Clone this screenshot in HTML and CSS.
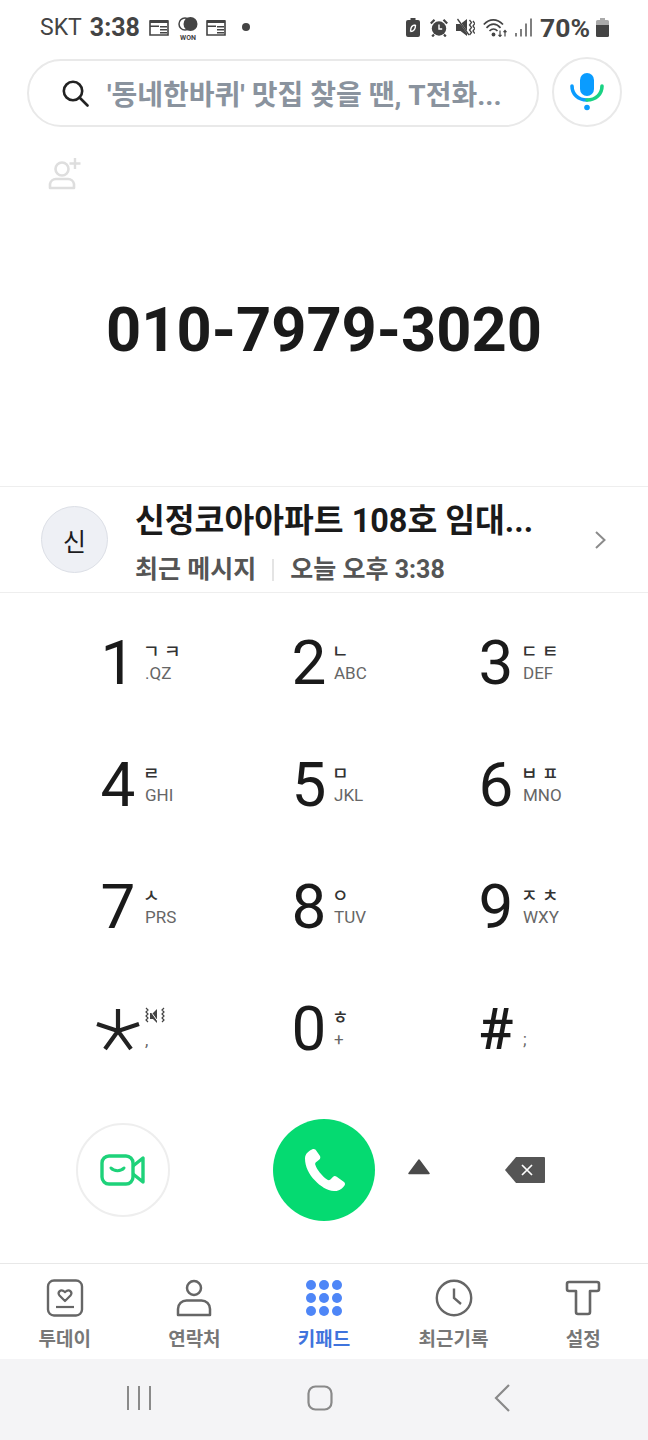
FILE: index.html
```html
<!DOCTYPE html>
<html lang="ko">
<head>
    <meta charset="UTF-8">
    <title>T전화 키패드</title>
    <link rel="stylesheet" href="styles.css">
</head>
<body>
    <!-- Status bar -->
    <div class="status">
        <div class="status-left">
            <span class="carrier">SKT</span>
            <span class="clock">3:38</span>
            <svg class="st-cal" viewBox="0 0 20 18"><path d="M1 3h18v14H1z" fill="none" stroke="#444" stroke-width="1.6"/><path d="M1 2h18v3H1zM11 8h7v1.5h-7zM11 11h7v1.5h-7zM11 14h7v1.5h-7zM1 7.5h9v1.5H1z" fill="#444"/></svg>
            <svg class="st-won" viewBox="0 0 22 24"><circle cx="8" cy="7" r="6" fill="none" stroke="#444" stroke-width="1.5"/><circle cx="13.5" cy="7" r="7" fill="#444"/><text x="11" y="22.5" class="won-text">WON</text></svg>
            <svg class="st-cal" viewBox="0 0 20 18"><path d="M1 3h18v14H1z" fill="none" stroke="#444" stroke-width="1.6"/><path d="M1 2h18v3H1zM11 8h7v1.5h-7zM11 11h7v1.5h-7zM11 14h7v1.5h-7zM1 7.5h9v1.5H1z" fill="#444"/></svg>
            <span class="st-dot"></span>
        </div>
        <div class="status-right">
            <svg class="st-ic" width="16" height="19" viewBox="0 0 16 19"><path d="M4.500 0h5v2h2.500A2 2 0 0 1 14 4V17A2 2 0 0 1 12 19H2A2 2 0 0 1 0 17V4A2 2 0 0 1 2 2H4.500z" fill="#444"/><path d="M9.500 7C6.500 7 4.500 9 4.500 13.500M4.500 13.500C7.500 13.500 9.500 11.500 9.500 7" stroke="#fff" stroke-width="1.400" fill="none"/></svg>
            <svg class="st-ic" width="18" height="19" viewBox="0 0 18 19"><circle cx="9" cy="10.500" r="7.200" fill="#444"/><path d="M9 6.500v4.500h3.200" stroke="#fff" stroke-width="1.400" fill="none"/><path d="M.8 5.500l3.700-3.700M17.200 5.500l-3.700-3.700M4 16.500l-1.800 2M14 16.500l1.800 2" stroke="#444" stroke-width="2.200"/></svg>
            <svg class="st-ic" width="19" height="19" viewBox="0 0 19 19"><path d="M0 6h4.500L11 1v17l-6.500-5H0z" fill="#444"/><path d="M2 1.500l11 15.500" stroke="#fff" stroke-width="1.300"/><path d="M1.500 1l11.500 16" stroke="#444" stroke-width="1.300"/><path d="M13.500 2l2 2.500-2 2.500 2 2.500-2 2.500 2 2.500-2 2.500M17 3l1.800 2.500L17 8l1.800 2.500L17 13l1.800 2.500" stroke="#444" stroke-width="1.300" fill="none"/></svg>
            <svg class="st-ic" width="24" height="19" viewBox="0 0 24 19"><path d="M.8 6.500C6.500.2 14 .2 20 6.500M3.500 9.800C8 5 13 5 17.500 9.800M6.500 13C9 10.300 12 10.300 14.500 13" stroke="#444" stroke-width="1.700" fill="none"/><circle cx="10.500" cy="16.500" r="1.900" fill="#444"/><path d="M17 12.500v6M22 18.500v-6M15.500 16.800l1.500 1.700 1.500-1.700M20.500 14.200l1.500-1.700 1.500 1.700" stroke="#444" stroke-width="1.200" fill="none"/></svg>
            <svg class="st-ic" width="17" height="19" viewBox="0 0 17 19"><path d="M1 15v3.500M6 11v7.500M11 5.500v13M16 .5v18" stroke="#555" stroke-width="1.500"/></svg>
            <span class="pct">70%</span>
            <svg class="st-ic" width="13" height="19" viewBox="0 0 13 19"><path d="M4 0h5v2h2.500A1.500 1.500 0 0 1 13 3.500V7H0V3.500A1.500 1.500 0 0 1 1.500 2H4z" fill="#aaa"/><path d="M0 7h13v10.500a1.500 1.500 0 0 1-1.500 1.500h-10A1.500 1.500 0 0 1 0 17.500z" fill="#444"/></svg>
        </div>
    </div>

    <!-- Search -->
    <div class="search-row">
        <div class="search-box">
            <svg width="28" height="28" viewBox="0 0 28 28"><circle cx="12" cy="12" r="9.200" fill="none" stroke="#222" stroke-width="2.600"/><path d="M18.500 18.500l8 8" stroke="#222" stroke-width="2.600" stroke-linecap="round"/></svg>
            <span class="search-text">'동네한바퀴' 맛집 찾을 땐, T전화...</span>
        </div>
        <div class="mic-btn">
            <svg width="34" height="38" viewBox="0 0 34 38"><rect x="10" y="0" width="14" height="23" rx="7" fill="#0a9cff"/><path d="M2 13C2 21 8 27 17 27" stroke="#0a9cff" stroke-width="3.600" stroke-linecap="round" fill="none"/><path d="M17 27C26 27 32 21 32 13" stroke="#19d283" stroke-width="3.600" stroke-linecap="round" fill="none"/><circle cx="17" cy="34.500" r="2.800" fill="#0a9cff"/></svg>
        </div>
    </div>

    <div class="add-row">
        <svg width="34" height="34" viewBox="0 0 34 34"><circle cx="14" cy="12" r="6.500" fill="none" stroke="#dedede" stroke-width="2.600"/><path d="M2 31v-4a6 6 0 0 1 6-5h12a6 6 0 0 1 6 5v4z" fill="none" stroke="#dedede" stroke-width="2.600" stroke-linejoin="round"/><path d="M27 1v11M21.500 6.500h11" stroke="#dedede" stroke-width="2.400"/></svg>
    </div>

    <div class="number">010-7979-3020</div>

    <!-- Matched contact -->
    <div class="match">
        <div class="avatar">신</div>
        <div class="match-info">
            <div class="match-name">신정코아아파트 108호 임대...</div>
            <div class="match-sub"><span>최근 메시지</span><i class="sep"></i><span>오늘 오후 3:38</span></div>
        </div>
        <svg class="chev" width="13" height="20" viewBox="0 0 13 20"><path d="M2 2l8.500 8L2 18" fill="none" stroke="#8b8b8b" stroke-width="2"/></svg>
    </div>

    <!-- Keypad -->
    <div class="keypad">
        <div class="key"><span class="digit">1</span><span class="sub"><b>ㄱ ㅋ</b><em>.QZ</em></span></div>
        <div class="key"><span class="digit">2</span><span class="sub"><b>ㄴ</b><em>ABC</em></span></div>
        <div class="key"><span class="digit">3</span><span class="sub"><b>ㄷ ㅌ</b><em>DEF</em></span></div>
        <div class="key"><span class="digit">4</span><span class="sub"><b>ㄹ</b><em>GHI</em></span></div>
        <div class="key"><span class="digit">5</span><span class="sub"><b>ㅁ</b><em>JKL</em></span></div>
        <div class="key"><span class="digit">6</span><span class="sub"><b>ㅂ ㅍ</b><em>MNO</em></span></div>
        <div class="key"><span class="digit">7</span><span class="sub"><b>ㅅ</b><em>PRS</em></span></div>
        <div class="key"><span class="digit">8</span><span class="sub"><b>ㅇ</b><em>TUV</em></span></div>
        <div class="key"><span class="digit">9</span><span class="sub"><b>ㅈ ㅊ</b><em>WXY</em></span></div>
        <div class="key">
            <span class="digit">
                <svg width="46" height="46" viewBox="0 0 46 46"><path d="M23 3v22M23 25L2 18M23 25L44 18M23 25L10 43M23 25L36 43" stroke="#222" stroke-width="4.200" fill="none"/></svg>
            </span>
            <span class="sub">
                <svg class="mute" width="22" height="18" viewBox="0 0 22 18"><path d="M6 6h3l4-4v14l-4-4H6z" fill="#444"/><path d="M5 2l10 14" stroke="#fff" stroke-width="1"/><path d="M2 1l2 2-2 2 2 2-2 2 2 2-2 2 2 2M20 1l-2 2 2 2-2 2 2 2-2 2 2 2-2 2" stroke="#444" stroke-width="1.200" fill="none"/></svg>
                <em>,</em>
            </span>
        </div>
        <div class="key"><span class="digit">0</span><span class="sub"><b>ㅎ</b><em>+</em></span></div>
        <div class="key"><span class="digit hash">#</span><span class="sub"><b>&nbsp;</b><em>;</em></span></div>
    </div>

    <!-- Call actions -->
    <div class="actions">
        <div class="video-btn">
            <svg width="46" height="32" viewBox="0 0 46 32"><rect x="2" y="2" width="31" height="28" rx="7" fill="none" stroke="#1ed27a" stroke-width="3.400"/><path d="M33 12l10-8v24l-10-8" fill="none" stroke="#1ed27a" stroke-width="3.400" stroke-linejoin="round"/><path d="M11 14c3 3.500 10 3.500 13 0" fill="none" stroke="#1ed27a" stroke-width="3" stroke-linecap="round"/></svg>
        </div>
        <div class="call-btn">
            <svg width="46" height="46" viewBox="0 0 46 46"><path d="M11 2.500c-3 1.500-7 4-7 9 0 8 4 16 10 22 5 5.500 12 10 19 10.500 5 .4 8.500-2.500 10.500-5.500 1-1.500.5-2.800-.8-3.800l-7-5c-1.400-1-2.600-1-3.800.2l-2.500 2.600c-1 1-2 1-3 .3-3-2-5.500-4.500-7.500-7-2-2.500-3.500-5-4.600-8-.4-1.200 0-2 1-2.800l2.800-2.200c1.300-1 1.500-2.300.9-3.800L15.500 4c-.8-1.800-2.700-2.500-4.500-1.500z" fill="#fff"/></svg>
        </div>
        <svg class="caret" width="22" height="16" viewBox="0 0 22 16"><path d="M11 1L21 14.500H1z" fill="#4a4a4a" stroke="#4a4a4a" stroke-width="1.500" stroke-linejoin="round"/></svg>
        <svg class="back" width="42" height="28" viewBox="0 0 42 28"><path d="M12 1h28a1 1 0 0 1 1 1v24a1 1 0 0 1-1 1H12L1 14z" fill="#555"/><path d="M18 9l10 10M28 9L18 19" stroke="#fff" stroke-width="1.700"/></svg>
    </div>

    <!-- Bottom tabs -->
    <div class="tabs">
        <div class="tab">
            <svg width="38" height="38" viewBox="0 0 38 38"><rect x="2" y="1.500" width="34" height="35" rx="6" fill="none" stroke="#666" stroke-width="2.400"/><path d="M19 22l-5.500-5.500c-2.500-3 1-6.500 4-4.500l1.500 1.200 1.500-1.200c3-2 6.500 1.500 4 4.500z" fill="none" stroke="#666" stroke-width="2.200" stroke-linejoin="round"/><path d="M10 28h18" stroke="#666" stroke-width="2.200"/></svg>
            <span>투데이</span>
        </div>
        <div class="tab">
            <svg width="36" height="38" viewBox="0 0 36 38"><circle cx="18" cy="9" r="7" fill="none" stroke="#666" stroke-width="2.500"/><path d="M2 36v-6a8.500 8.500 0 0 1 8.500-8.500h15A8.500 8.500 0 0 1 34 30v6z" fill="none" stroke="#666" stroke-width="2.500" stroke-linejoin="round"/></svg>
            <span>연락처</span>
        </div>
        <div class="tab active">
            <div class="dots"><i></i><i></i><i></i><i></i><i></i><i></i><i></i><i></i><i></i></div>
            <span>키패드</span>
        </div>
        <div class="tab">
            <svg width="38" height="38" viewBox="0 0 38 38"><circle cx="19" cy="19" r="17.200" fill="none" stroke="#666" stroke-width="2.400"/><path d="M19 9.500V19l7 6" fill="none" stroke="#666" stroke-width="2.400"/></svg>
            <span>최근기록</span>
        </div>
        <div class="tab">
            <svg width="36" height="38" viewBox="0 -1 36 38"><path d="M4 2h28a2 2 0 0 1 2 2v5a2 2 0 0 1-2 2h-7v21a2 2 0 0 1-2 2H13a2 2 0 0 1-2-2V11H4a2 2 0 0 1-2-2V4a2 2 0 0 1 2-2z" fill="none" stroke="#666" stroke-width="2.600" stroke-linejoin="round"/></svg>
            <span>설정</span>
        </div>
    </div>

    <!-- Android nav -->
    <div class="sysbar">
        <svg width="26" height="26" viewBox="0 0 26 26"><path d="M2 1v24M13 1v24M24 1v24" stroke="#8a8a8a" stroke-width="2"/></svg>
        <svg class="home" width="26" height="26" viewBox="0 0 26 26"><rect x="1.500" y="1.500" width="23" height="23" rx="7" fill="none" stroke="#8a8a8a" stroke-width="2.200"/></svg>
        <svg width="18" height="28" viewBox="0 0 18 28"><path d="M15 1L2 14l13 13" fill="none" stroke="#8a8a8a" stroke-width="2.200"/></svg>
    </div>
</body>
</html>
```
FILE: styles.css
```css
* {
    box-sizing: border-box;
}

body {
    margin: 0;
    width: 648px;
    height: 1440px;
    background-color: #fff;
    font-family: Roboto, "Noto Sans CJK KR", sans-serif;
    color: #1c1c1e;
    overflow: hidden;
    display: flex;
    flex-direction: column;
}

/* Status bar */
.status {
    height: 54px;
    padding: 0 39px 0 40px;
    display: flex;
    justify-content: space-between;
    align-items: center;
    color: #444;
}

.status-left,
.status-right {
    display: flex;
    align-items: center;
}

.carrier {
    font-size: 23px;
    margin-right: 8px;
}

.clock {
    font-size: 25px;
    font-weight: 700;
    margin-right: 9px;
}

.st-cal {
    width: 20px;
    height: 18px;
    margin-right: 8px;
}

.st-won {
    width: 22px;
    height: 24px;
    margin-right: 7px;
    margin-top: 3px;
}

.won-text {
    font-size: 7px;
    font-weight: 700;
    text-anchor: middle;
    fill: #444;
}

.st-dot {
    width: 8px;
    height: 8px;
    margin-left: 8px;
    border-radius: 50%;
    background-color: #444;
}

.st-ic {
    margin-left: 8px;
}

.pct {
    font-size: 26.5px;
    font-weight: 700;
    margin-left: 8px;
}

.status-right .pct + .st-ic {
    margin-left: 6px;
}

/* Search */
.search-row {
    height: 70px;
    margin-top: 3px;
    padding: 0 26px 0 27px;
    display: flex;
    align-items: flex-end;
    justify-content: space-between;
}

.search-box {
    width: 512px;
    height: 68px;
    border: 2px solid #e9e9e9;
    border-radius: 34px;
    padding-left: 32px;
    display: flex;
    align-items: center;
}

.search-text {
    margin-left: 18px;
    font-size: 28px;
    font-weight: 700;
    color: #8a939e;
    white-space: nowrap;
}

.mic-btn {
    width: 70px;
    height: 70px;
    border: 2px solid #e9e9e9;
    border-radius: 50%;
    display: flex;
    align-items: center;
    justify-content: center;
}

.add-row {
    height: 34px;
    margin-top: 30px;
    padding-left: 48px;
}

.number {
    height: 295px;
    padding-top: 100px;
    font-size: 61.4px;
    font-weight: 700;
    line-height: 78px;
    text-align: center;
    color: #1a1a1a;
}

/* Matched contact */
.match {
    height: 107px;
    padding: 0 41px 0 41px;
    border-top: 1px solid #eee;
    border-bottom: 1px solid #eee;
    display: flex;
    align-items: center;
}

.avatar {
    width: 67px;
    height: 67px;
    border: 1px solid #dcdfe6;
    border-radius: 50%;
    background-color: #eef0f5;
    font-size: 25px;
    display: flex;
    align-items: center;
    justify-content: center;
    flex-shrink: 0;
}

.match-info {
    margin: 5px 0 0 27px;
    flex: 1;
}

.match-name {
    font-size: 32.4px;
    font-weight: 700;
    line-height: 44px;
    color: #1a1a1a;
    white-space: nowrap;
}

.match-sub {
    margin-top: 11px;
    font-size: 25px;
    font-weight: 700;
    line-height: 32px;
    color: #555;
    display: flex;
    align-items: center;
}

.sep {
    width: 2px;
    height: 22px;
    margin: 0 16px;
    background-color: #e4e4e4;
}

/* Keypad */
.keypad {
    height: 488px;
    margin-top: 9px;
    padding-left: 95px;
    display: grid;
    grid-template-columns: repeat(3, 189px);
    grid-auto-rows: 122px;
}

.key {
    display: flex;
    align-items: center;
}

.digit {
    width: 44px;
    padding-left: 2px;
    font-size: 62px;
    font-weight: 400;
    line-height: 72px;
    text-align: center;
    color: #1a1a1a;
    display: flex;
    justify-content: center;
}

/* middle column sits a little further right */
.key:nth-child(3n+2) .digit {
    padding-left: 6px;
}

.digit svg {
    flex-shrink: 0;
}

.hash {
    font-size: 58px;
    font-weight: 500;
}

.sub {
    margin-left: 6px;
    display: flex;
    flex-direction: column;
    line-height: 22px;
}

.sub b {
    margin-left: -2px;
    font-size: 18px;
    font-weight: 500;
    color: #333;
    line-height: 20px;
}

.sub em {
    font-style: normal;
    font-size: 17px;
    color: #666;
}

.mute {
    margin: 0 0 4px -1px;
}

/* Call actions */
.actions {
    height: 173px;
    padding: 29px 0 0 76px;
    display: flex;
    align-items: flex-start;
}

.video-btn {
    width: 94px;
    height: 94px;
    margin-top: 4px;
    border: 2px solid #eee;
    border-radius: 50%;
    display: flex;
    align-items: center;
    justify-content: center;
}

.call-btn {
    width: 102px;
    height: 102px;
    margin-left: 103px;
    border-radius: 50%;
    background-color: #05da71;
    display: flex;
    align-items: center;
    justify-content: center;
}

.caret {
    margin: 40px 0 0 33px;
}

.back {
    margin: 37px 0 0 74px;
}

/* Bottom tabs */
.tabs {
    height: 96px;
    border-top: 1px solid #e8e8e8;
    display: flex;
}

.tab {
    flex: 1;
    padding-top: 15px;
    display: flex;
    flex-direction: column;
    align-items: center;
    font-size: 19px;
    font-weight: 700;
    color: #777;
}

.tab span {
    margin-top: 8px;
    line-height: 30px;
    white-space: nowrap;
}

.tab.active {
    color: #3f74dd;
}

.dots {
    width: 38px;
    height: 38px;
    display: grid;
    grid-template-columns: repeat(3, 10px);
    grid-auto-rows: 10px;
    gap: 3px;
    justify-content: center;
    align-content: center;
}

.dots i {
    border-radius: 50%;
    background-color: #4e86f7;
}

/* Android nav */
.sysbar {
    flex: 1;
    background-color: #f4f4f6;
    padding: 0 136px 3px 126px;
    display: flex;
    align-items: center;
    justify-content: space-between;
}

.home {
    margin-right: 6px;
}
```
